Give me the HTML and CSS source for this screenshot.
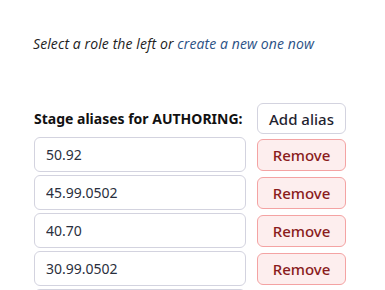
FILE: index.html
```html
<!DOCTYPE html>
<html lang="en">

<head>
    <meta charset="utf-8">
    <meta name="viewport" content="width=device-width, initial-scale=1.0">
    <title>Stage aliases</title>
    <link rel="stylesheet" href="styles.css">
</head>

<body>
    <main class="panel">
        <p class="hint">Select a role the left or <a href="#">create a new one now</a></p>

        <div class="aliases">
            <h3 class="aliases-title">Stage aliases for AUTHORING:</h3>
            <button class="btn">Add alias</button>

            <input class="alias" type="text" value="50.92">
            <button class="btn btn-remove">Remove</button>

            <input class="alias" type="text" value="45.99.0502">
            <button class="btn btn-remove">Remove</button>

            <input class="alias" type="text" value="40.70">
            <button class="btn btn-remove">Remove</button>

            <input class="alias" type="text" value="30.99.0502">
            <button class="btn btn-remove">Remove</button>

            <input class="alias" type="text" value="">
        </div>
    </main>
</body>

</html>
```

FILE: styles.css
```css
body {
    margin: 0;
    background-color: #ffffff;
    font-family: "Noto Sans", "Open Sans", sans-serif;
    color: #1f2330;
}

.panel {
    padding: 34px 0 0 33px;
}

.hint {
    margin: 0;
    font-family: "Open Sans", "Noto Sans", sans-serif;
    font-size: 14px;
    line-height: 20px;
    font-style: italic;
    letter-spacing: 0.1px;
    color: #222222;
}

.hint a {
    color: #2a5185;
    text-decoration: none;
}

.aliases {
    display: grid;
    grid-template-columns: 212px 89px;
    column-gap: 11px;
    row-gap: 3px;
    align-items: center;
    margin-top: 49px;
    margin-left: 1px;
}

.aliases-title {
    margin: 0;
    font-size: 14px;
    font-weight: 700;
    color: #111111;
}

.btn {
    height: 31px;
    padding: 0;
    font-family: "Noto Sans", sans-serif;
    font-size: 15px;
    font-weight: 500;
    color: #1f2330;
    background-color: #ffffff;
    border: 1px solid #d3d3df;
    border-radius: 6px;
}

.btn-remove {
    height: 32px;
    color: #8a1c1c;
    background-color: #fdeeee;
    border-color: #f4a3a3;
}

.alias {
    box-sizing: border-box;
    width: 212px;
    height: 35px;
    margin: 0;
    padding: 0 11px;
    font-family: "Noto Sans", sans-serif;
    font-size: 14px;
    color: #2a2f3d;
    border: 1px solid #d3d3df;
    border-radius: 6px;
    outline: none;
}
```
